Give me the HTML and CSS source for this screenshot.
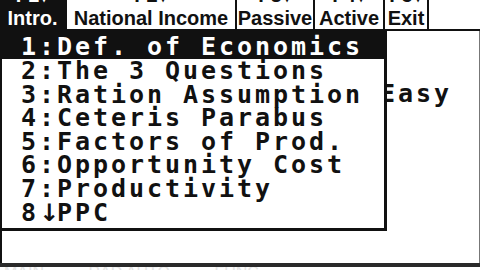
FILE: index.html
```html
<!DOCTYPE html>
<html>
<head>
<meta charset="utf-8">
<link rel="stylesheet" href="styles.css">
</head>
<body>
<div class="screen">
  <div class="toolbar">
    <div class="tab t1 sel"><span class="fkey"><span>F1▾</span></span><span class="label">Intro.</span></div>
    <div class="tab t2"><span class="fkey"><span>F2▾</span></span><span class="label">National Income</span></div>
    <div class="tab t3"><span class="fkey"><span>F3▾</span></span><span class="label">Passive</span></div>
    <div class="tab t4"><span class="fkey"><span>F4▾</span></span><span class="label">Active</span></div>
    <div class="tab t5"><span class="fkey"><span>F5▾</span></span><span class="label">Exit</span></div>
    <div class="tab blank"></div>
  </div>
  <div class="home">
    <div class="history">Easy</div>
    <ul class="menu">
      <li class="item sel">1:Def. of Economics</li>
      <li class="item">2:The 3 Questions</li>
      <li class="item">3:Ration Assumption</li>
      <li class="item">4:Ceteris Parabus</li>
      <li class="item">5:Factors of Prod.</li>
      <li class="item">6:Opportunity Cost</li>
      <li class="item">7:Productivity</li>
      <li class="item">8<span class="arrow">↓</span>PPC</li>
    </ul>
  </div>
  <div class="status"><span>MAIN          RAD AUTO          FUNC</span></div>
</div>
</body>
</html>
```
FILE: styles.css
```css
* { box-sizing: border-box; }
html, body { margin: 0; padding: 0; background: #fff; }
body { width: 480px; height: 270px; overflow: hidden; }
.screen { width: 480px; height: 270px; display: flex; flex-direction: column; background: #fff; color: #111; }

.toolbar { height: 31px; display: flex; border-bottom: 2px solid #111; flex: none; }
.tab { display: flex; flex-direction: column; align-items: center; border-left: 2px solid #111; background: #fff; color: #111;
  font-family: "Liberation Sans", Arial, sans-serif; font-weight: bold; font-size: 20px; }
.tab.sel { background: #111; color: #fff; border-left: none; }
.t1 { width: 65px; }
.t2 { width: 170px; }
.t3 { width: 78px; }
.t4 { width: 70px; }
.t5 { width: 44px; }
.blank { flex: 1; }
.fkey { display: block; height: 5px; overflow: hidden; }
.fkey span { display: block; line-height: 20px; margin-top: -15px; }
.label { display: block; line-height: 20px; margin-top: 3px; white-space: nowrap; }

.home { position: relative; height: 232px; flex: none; border-left: 2px solid #111; border-right: 1px solid #777; }
.history, .menu { font-family: "DejaVu Sans Mono", "Liberation Mono", monospace; font-weight: bold; font-size: 25px; letter-spacing: 2.95px; line-height: 23.6px; }
.history { position: absolute; left: 378px; top: 50.6px; z-index: 0; white-space: pre; }
.menu { position: absolute; left: 0; top: 0; z-index: 1; width: 385px; margin: 0; padding: 0 0 3.8px 0; list-style: none;
  background: #fff; border-right: 3px solid #111; border-bottom: 3px solid #111; }
.item { padding-left: 19px; height: 23.6px; white-space: pre; }
.item.sel { background: #111; color: #fff; padding-top: 4.4px; height: 28px; }
.arrow { display: inline-block; width: 18px; text-align: center; letter-spacing: 0; font-family: "DejaVu Sans", sans-serif; font-size: 24px; font-weight: bold; }

.status { flex: none; height: 7px; border-top: 4px solid #2a2a2a; overflow: hidden; font-family: "Liberation Sans", Arial, sans-serif;
  font-size: 16px; color: #e4e4e4; white-space: pre; }
.status span { display: block; line-height: 16px; margin-top: -2px; padding-left: 4px; }
```
